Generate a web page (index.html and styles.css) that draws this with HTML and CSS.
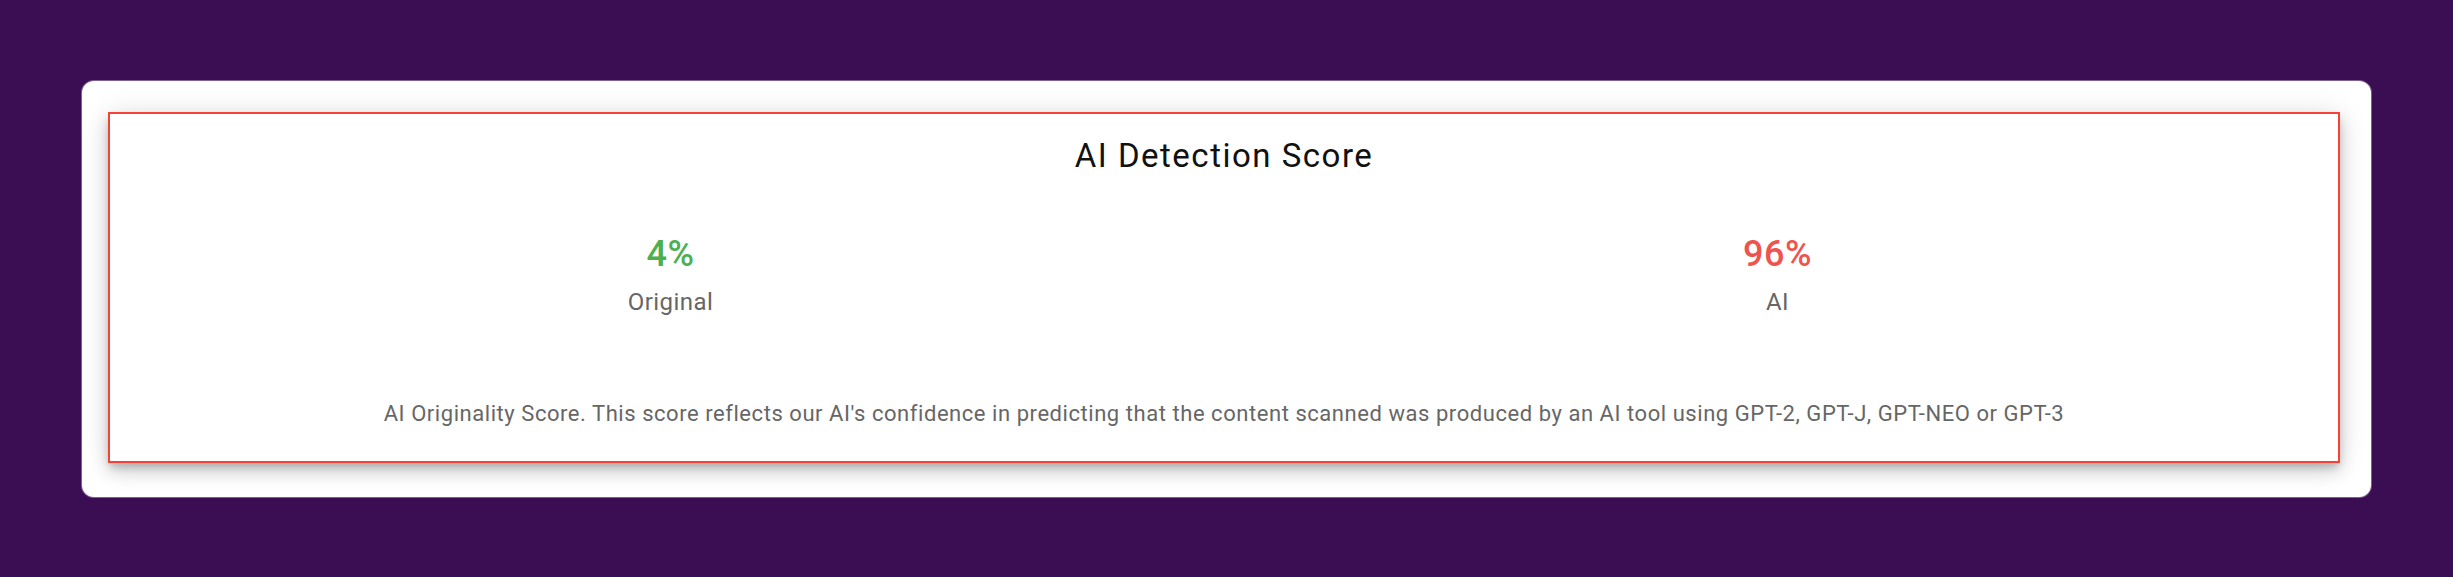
FILE: index.html
```html
<!DOCTYPE html>
<html lang="en">
<head>
    <meta charset="UTF-8">
    <meta name="viewport" content="width=device-width, initial-scale=1.0">
    <title>AI Detection Score</title>
    <link rel="stylesheet" href="styles.css">
</head>
<body>
    <div class="card">
        <div class="score-box">
            <h2 class="score-title">AI Detection Score</h2>
            <div class="score-row">
                <div class="score-col">
                    <div class="score-value original">4%</div>
                    <div class="score-label">Original</div>
                </div>
                <div class="score-col">
                    <div class="score-value ai">96%</div>
                    <div class="score-label">AI</div>
                </div>
            </div>
            <p class="score-note">AI Originality Score. This score reflects our AI's confidence in predicting that the content scanned was produced by an AI tool using GPT-2, GPT-J, GPT-NEO or GPT-3</p>
        </div>
    </div>
</body>
</html>
```

FILE: styles.css
```css
body {
    font-family: Roboto, "Liberation Sans", Arial, sans-serif;
    background-color: #3b0d52;
    margin: 0;
    padding: 81px 82px 82px 82px;
}
.card {
    background-color: #fff;
    border-radius: 12px;
    padding: 31px 31px 34px 26px;
    box-shadow: 0 0 0 1px rgba(255, 255, 255, 0.35);
}
.score-box {
    border: 2px solid #f44336;
    background-color: #fff;
    padding: 18px 0 31px 0;
    box-shadow: 0 5px 8px -2px rgba(0, 0, 0, 0.2),
                0 9px 16px 0 rgba(0, 0, 0, 0.14),
                0 2px 28px 0 rgba(0, 0, 0, 0.12);
}
.score-title {
    margin: 0;
    text-align: center;
    font-size: 33px;
    line-height: 48px;
    font-weight: 400;
    letter-spacing: 1.5px;
    color: #111;
}
.score-row {
    display: flex;
    padding: 0 7px;
    margin-top: 52px;
}
.score-col {
    flex: 1;
    text-align: center;
}
.score-value {
    font-size: 36px;
    line-height: 44px;
    font-weight: 500;
    letter-spacing: 0.5px;
}
.score-value.original {
    color: #4caf50;
}
.score-value.ai {
    color: #ef5350;
}
.score-label {
    margin-top: 10px;
    font-size: 24px;
    line-height: 32px;
    letter-spacing: 0.45px;
    color: #666;
}
.score-note {
    margin: 80px 0 0 0;
    text-align: center;
    font-size: 22px;
    line-height: 32px;
    letter-spacing: 0.55px;
    color: #666;
}
```
